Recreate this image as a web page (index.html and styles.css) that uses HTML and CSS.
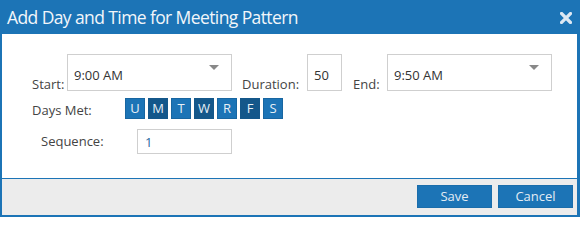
FILE: index.html
```html
<!DOCTYPE html>
<html>
<head>
<meta charset="utf-8">
<link rel="stylesheet" href="styles.css">
</head>
<body>
<div class="dialog">
  <div class="header">
    <span class="title">Add Day and Time for Meeting Pattern</span>
    <svg class="close" width="12" height="12" viewBox="0 0 12 12"><path d="M1.5 1.5 L10.5 10.5 M10.5 1.5 L1.5 10.5" stroke="#dde8f3" stroke-width="3.2" stroke-linecap="square" fill="none"/></svg>
  </div>
  <div class="content">
    <div class="row time-row">
      <span class="lbl lbl-start">Start:</span>
      <div class="select"><span class="val">9:00 AM</span><span class="arrow"></span></div>
      <span class="lbl lbl-dur">Duration:</span>
      <div class="dur"><span class="val">50</span></div>
      <span class="lbl lbl-end">End:</span>
      <div class="select"><span class="val">9:50 AM</span><span class="arrow"></span></div>
    </div>
    <div class="row days-row">
      <span class="lbl lbl-days">Days Met:</span>
      <div class="days">
        <span class="day">U</span>
        <span class="day on">M</span>
        <span class="day">T</span>
        <span class="day on">W</span>
        <span class="day">R</span>
        <span class="day on">F</span>
        <span class="day">S</span>
      </div>
    </div>
    <div class="row seq-row">
      <span class="lbl lbl-seq">Sequence:</span>
      <div class="seq"><span class="val">1</span></div>
    </div>
  </div>
  <div class="footer">
    <button class="btn">Save</button>
    <button class="btn">Cancel</button>
  </div>
</div>
</body>
</html>
```
FILE: styles.css
```css
* { box-sizing: border-box; }
html, body { margin: 0; padding: 0; background: #fff; }
body { font-family: "Open Sans", "Liberation Sans", sans-serif; }
.dialog {
  width: 580px;
  height: 217px;
  border-left: 2px solid #1c74b6;
  border-right: 3px solid #1c74b6;
  border-bottom: 2px solid #1c74b6;
  display: flex;
  flex-direction: column;
}
.header {
  height: 34px;
  margin: 0 -3px 0 -2px;
  background: #1c74b6;
  display: flex;
  align-items: center;
  justify-content: space-between;
  padding: 0 8px 0 7px;
}
.title {
  color: #f2f6fa;
  font-size: 17.5px;
  letter-spacing: -0.6px;
  line-height: 34px;
}
.close { display: block; margin-top: 1px; }
.content {
  height: 145px;
  border-bottom: 1px solid #1c74b6;
  padding-top: 20px;
}
.row { display: flex; }
.lbl { color: #444; font-size: 13px; white-space: nowrap; }
.time-row { align-items: flex-end; height: 37px; }
.time-row .lbl { line-height: 14px; }
.lbl-start { margin-left: 30px; width: 35px; }
.lbl-dur { margin-left: 10px; width: 65px; }
.lbl-end { margin-left: 11px; width: 34px; }
.select, .dur, .seq {
  border: 1px solid #cfcfcf;
  position: relative;
  font-size: 13px;
  color: #333;
}
.select { width: 165px; height: 37px; padding: 11px 0 0 6px; }
.dur { width: 35px; height: 37px; padding: 11px 0 0 6px; }
.val { display: block; line-height: 18px; }
.arrow {
  position: absolute;
  right: 12px;
  top: 10px;
  width: 0;
  height: 0;
  border-left: 5px solid transparent;
  border-right: 5px solid transparent;
  border-top: 5px solid #888;
}
.days-row { margin-top: 7px; align-items: flex-start; }
.lbl-days { margin-left: 30px; width: 93px; line-height: 18px; margin-top: 3px; }
.days { display: flex; gap: 3px; }
.day {
  width: 20px;
  height: 21px;
  background: #1c74b6;
  border: 1px solid #1866a1;
  color: #e8f0f7;
  font-size: 13px;
  line-height: 19px;
  text-align: center;
}
.day.on { background: #14578a; border-color: #14578a; }
.seq-row { margin-top: 10px; align-items: flex-start; }
.lbl-seq { margin-left: 39px; width: 96px; line-height: 18px; margin-top: 3px; }
.seq { width: 95px; height: 25px; padding: 3px 0 0 7px; color: #2a6aa0; }
.footer {
  flex: 1;
  background: #ececec;
  display: flex;
  justify-content: flex-end;
  align-items: flex-start;
  gap: 6px;
  padding: 6px 4px 0 0;
}
.btn {
  width: 75px;
  height: 23px;
  background: #1c74b6;
  border: 1px solid #1a6dab;
  color: #e4ecf4;
  font-family: "Open Sans", "Liberation Sans", sans-serif;
  font-size: 13px;
  line-height: 19px;
  padding: 0;
  margin: 0;
}
```
